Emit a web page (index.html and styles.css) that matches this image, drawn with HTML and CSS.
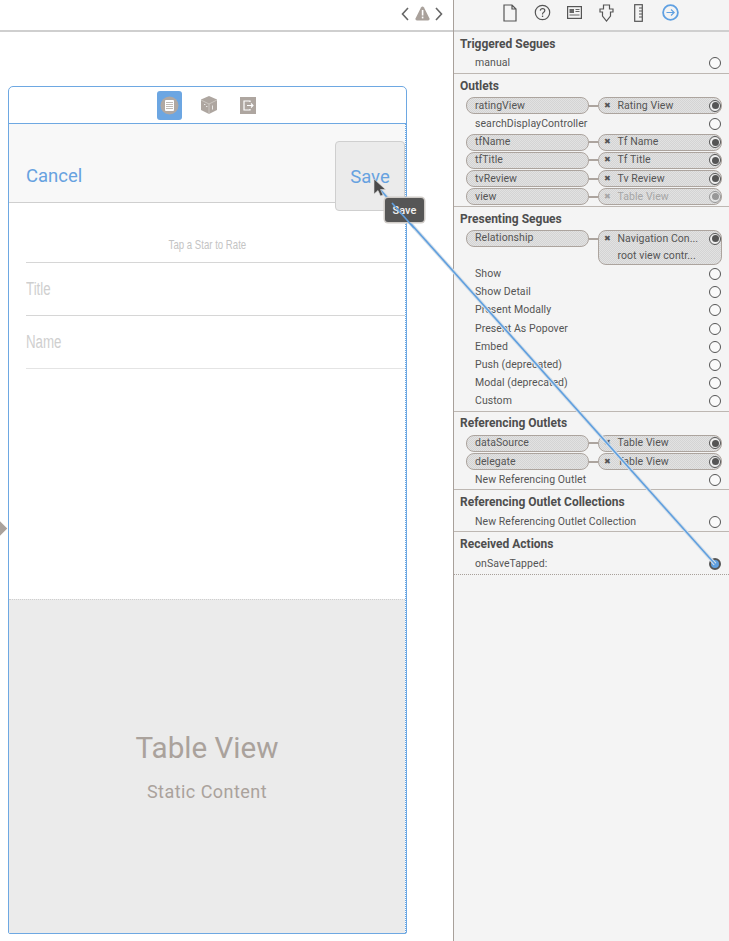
FILE: index.html
```html
<!DOCTYPE html>
<html lang="en">
<head>
<meta charset="utf-8">
<title>Storyboard connections</title>
<link rel="stylesheet" href="styles.css">
</head>
<body>
<div class="app">
  <main class="editor">
    <div class="jumpbar">
      <svg class="jump-icon" width="52" height="20" viewBox="0 0 52 20">
        <path d="M8 4 L2.5 10 L8 16" class="chev"/>
        <path d="M21 3.5 Q22.5 1.5 24 3.5 L29.5 14.5 Q30 16.5 28 16.5 H17 Q15 16.5 15.5 14.5 Z" class="warn"/>
        <rect x="21.8" y="6" width="1.6" height="5.5" fill="#fff"/>
        <rect x="21.8" y="12.6" width="1.6" height="1.8" fill="#fff"/>
        <path d="M36 4 L41.5 10 L36 16" class="chev"/>
      </svg>
    </div>
    <div class="canvas">
      <div class="entry-arrow"></div>
      <section class="scene">
        <div class="scene-dock">
          <span class="dock-active">
            <svg width="25" height="29" viewBox="0 0 25 29">
              <circle cx="12.5" cy="14.5" r="9" fill="#b0a8a2"/>
              <rect x="8" y="9" width="9" height="11" rx="1" fill="#fff"/>
              <path d="M9 11.5h7M9 13.5h7M9 15.5h7M9 17.5h7" stroke="#b0a8a2" stroke-width=".8"/>
            </svg>
          </span>
          <svg width="16" height="18" viewBox="0 0 16 18">
            <path d="M8 0 L16 3.5 V14 L8 18 L0 14 V3.5 Z" fill="#aea6a0"/>
            <path d="M8 8 V18 M0 4 L8 8 L16 4" stroke="#d8d4d0" stroke-width=".7" fill="none"/>
            <path d="M11.5 9.5V13.5M3 8.5h1.4M5 10.5h1.4" stroke="#e8e6e4" stroke-width="1"/>
          </svg>
          <svg class="dock-exit" width="16" height="17" viewBox="0 0 16 17">
            <rect width="16" height="17" fill="#aea6a0"/>
            <path d="M10 5 V4 H4 V13 H10 V12" stroke="#fff" stroke-width="1.2" fill="none"/>
            <path d="M7 8.5 H13 M11 6.5 L13 8.5 L11 10.5" stroke="#fff" stroke-width="1.1" fill="none"/>
          </svg>
        </div>
        <div class="scene-view">
          <header class="navbar">
            <span class="nav-item">Cancel</span>
            <span class="save-box"><span class="nav-item">Save</span></span>
          </header>
          <div class="form">
            <div class="form-row rate-row"><span class="narrow">Tap a Star to Rate</span></div>
            <div class="form-row field-row"><span class="narrow left">Title</span></div>
            <div class="form-row field-row"><span class="narrow left">Name</span></div>
          </div>
          <div class="placeholder">
            <div class="ph-title">Table View</div>
            <div class="ph-sub">Static Content</div>
          </div>
        </div>
      </section>
    </div>
  </main>

  <aside class="inspector">
    <nav class="ins-tabs">
      <svg width="14" height="18" viewBox="0 0 14 18"><path d="M1 1 H9 L13 5 V17 H1 Z M9 1 V5 H13" class="tab-line"/></svg>
      <svg width="17" height="17" viewBox="0 0 17 17"><circle cx="8.5" cy="8.5" r="7.2" class="tab-line"/><path d="M6.3 6.6 Q6.5 4.5 8.6 4.5 Q10.8 4.6 10.8 6.5 Q10.8 7.7 9.4 8.5 Q8.5 9 8.5 10.4" class="tab-line"/><rect x="7.9" y="11.6" width="1.3" height="1.4" fill="#555"/></svg>
      <svg width="15" height="13" viewBox="0 0 15 13"><rect x=".6" y=".6" width="13.8" height="11.8" class="tab-line"/><rect x="2.5" y="3" width="4.5" height="4" fill="#666"/><path d="M8.5 3.5H12.5M8.5 5.5H12.5M2.5 9H12.5" stroke="#666"/></svg>
      <svg width="15" height="18" viewBox="0 0 15 18"><path d="M4.5 1 H10.5 V5 H14 V8 H11.5 V12 L7.5 17 L3.5 12 V8 H1 V5 H4.5 Z" class="tab-line"/></svg>
      <svg width="9" height="18" viewBox="0 0 9 18"><rect x=".7" y=".7" width="7.6" height="16.6" class="tab-line"/><path d="M5 4H8M5 7H8M5 10H8M5 13H8" stroke="#555"/></svg>
      <svg width="17" height="17" viewBox="0 0 17 17"><circle cx="8.5" cy="8.5" r="7.4" fill="none" stroke="#5fa0e2" stroke-width="1.8"/><path d="M4.5 8.5H12M9 5.5L12.2 8.5L9 11.5" fill="none" stroke="#5fa0e2" stroke-width="1.1"/></svg>
    </nav>

    <section class="ins-section first">
      <h2>Triggered Segues</h2>
      <div class="row"><span class="label">manual</span><i class="radio"></i></div>
    </section>

    <section class="ins-section">
      <h2>Outlets</h2>
      <div class="row linked"><span class="pill from">ratingView</span><i class="link"></i><span class="pill to"><b>✖</b>Rating View<i class="radio on"></i></span></div>
      <div class="row"><span class="label">searchDisplayController</span><i class="radio"></i></div>
      <div class="row linked"><span class="pill from">tfName</span><i class="link"></i><span class="pill to"><b>✖</b>Tf Name<i class="radio on"></i></span></div>
      <div class="row linked"><span class="pill from">tfTitle</span><i class="link"></i><span class="pill to"><b>✖</b>Tf Title<i class="radio on"></i></span></div>
      <div class="row linked"><span class="pill from">tvReview</span><i class="link"></i><span class="pill to"><b>✖</b>Tv Review<i class="radio on"></i></span></div>
      <div class="row linked"><span class="pill from">view</span><i class="link"></i><span class="pill to faded"><b>✖</b>Table View<i class="radio on"></i></span></div>
    </section>

    <section class="ins-section">
      <h2>Presenting Segues</h2>
      <div class="row linked tall"><span class="pill from">Relationship</span><i class="link"></i><span class="pill to two"><span class="two-line"><b>✖</b>Navigation Con...<i class="radio on"></i></span><span class="two-sub">root view contr...</span></span></div>
      <div class="row"><span class="label">Show</span><i class="radio"></i></div>
      <div class="row"><span class="label">Show Detail</span><i class="radio"></i></div>
      <div class="row"><span class="label">Present Modally</span><i class="radio"></i></div>
      <div class="row"><span class="label">Present As Popover</span><i class="radio"></i></div>
      <div class="row"><span class="label">Embed</span><i class="radio"></i></div>
      <div class="row"><span class="label">Push (deprecated)</span><i class="radio"></i></div>
      <div class="row"><span class="label">Modal (deprecated)</span><i class="radio"></i></div>
      <div class="row"><span class="label">Custom</span><i class="radio"></i></div>
    </section>

    <section class="ins-section">
      <h2>Referencing Outlets</h2>
      <div class="row linked"><span class="pill from">dataSource</span><i class="link"></i><span class="pill to"><b>✖</b>Table View<i class="radio on"></i></span></div>
      <div class="row linked"><span class="pill from">delegate</span><i class="link"></i><span class="pill to"><b>✖</b>Table View<i class="radio on"></i></span></div>
      <div class="row"><span class="label">New Referencing Outlet</span><i class="radio"></i></div>
    </section>

    <section class="ins-section">
      <h2>Referencing Outlet Collections</h2>
      <div class="row"><span class="label">New Referencing Outlet Collection</span><i class="radio"></i></div>
    </section>

    <section class="ins-section last">
      <h2>Received Actions</h2>
      <div class="row"><span class="label">onSaveTapped:</span><i class="radio active"></i></div>
    </section>
  </aside>

  <svg class="wire" width="729" height="941" viewBox="0 0 729 941">
    <line x1="377" y1="186" x2="715" y2="564" stroke="#d5dfe8" stroke-width="3.6"/>
    <line x1="377" y1="186" x2="715" y2="564" stroke="#5f9fdf" stroke-width="1.6"/>
  </svg>
  <div class="drag-tip">Save</div>
  <svg class="wire" width="729" height="941" viewBox="0 0 729 941">
    <line x1="392" y1="203" x2="414" y2="228" stroke="#5f9fdf" stroke-width="1.6"/>
    <path d="M374 179 V194 L378 190.5 L380.5 196 L383 195 L380.5 189.5 L385.5 189.5 Z" fill="#4a4a4a" stroke="#ddd" stroke-width=".6"/>
  </svg>
</div>
</body>
</html>
```
FILE: styles.css
```css
* { box-sizing: border-box; }
html, body { margin: 0; padding: 0; }
body { width: 729px; height: 941px; overflow: hidden; background: #fff; font-family: "Roboto", "Liberation Sans", sans-serif; }
.app { position: relative; display: grid; grid-template-columns: 453px 276px; width: 729px; height: 941px; overflow: hidden; }

.editor { display: flex; flex-direction: column; height: 941px; background: #fff; }
.jumpbar { height: 32px; flex: none; display: flex; justify-content: flex-end; align-items: center; padding: 0 1px 3px 0; border-bottom: 2px solid #cfcfcf; }
.chev { fill: none; stroke: #666; stroke-width: 1.6; }
.warn { fill: #a9a19b; }

.canvas { position: relative; flex: 1; padding: 54px 46px 8px 8px; }
.entry-arrow { position: absolute; left: -6px; top: 491px; width: 11px; height: 11px; background: #aaa29c; transform: rotate(45deg); }

.scene { display: flex; flex-direction: column; height: 848px; border: 1.5px solid #6ea8e2; border-radius: 5px 5px 2px 2px; }
.scene-dock { height: 37px; flex: none; display: flex; align-items: center; gap: 19px; padding-left: 147.5px; border-bottom: 1.5px solid #6ea8e2; }
.dock-active { display: flex; width: 25px; height: 29px; background: #6ca6e2; border-radius: 3px; }
.dock-exit { margin-left: 4px; }

.scene-view { flex: 1; display: flex; flex-direction: column; border-right: 1px dotted #6ea8e2; }
.navbar { position: relative; height: 79px; flex: none; display: flex; justify-content: space-between; padding: 0 0 0 17px; background: #f8f8f8; border-bottom: 1.5px solid #cfcfcf; }
.nav-item { font-size: 18.5px; color: #67a2e0; line-height: 24px; align-self: flex-start; margin-top: 40px; }
.save-box { position: absolute; right: 0; top: 17px; width: 70px; height: 70px; display: flex; justify-content: center; background: #ebebeb; border: 1.5px solid #cfcfcf; border-radius: 4px; }
.save-box .nav-item { margin-top: 23px; }

.form { flex: 1; padding-left: 17px; }
.form-row { border-bottom: 1px solid #d6d6d6; color: #cfcfcf; font-family: "Liberation Sans", sans-serif; }
.narrow { display: inline-block; transform: scaleX(.74); }
.narrow.left { transform-origin: left center; }
.rate-row { height: 60px; padding: 34px 17px 0 0; text-align: center; font-size: 13px; line-height: 16px; color: #c4c4c4; }
.field-row { height: 53px; padding-top: 15px; font-size: 18px; line-height: 22px; }
.field-row:last-child { border-bottom-width: 1.5px; border-bottom-color: #e4e4e4; }

.placeholder { height: 334px; flex: none; display: flex; flex-direction: column; align-items: center; padding-top: 130px; background: #ebebeb; border-top: 1px dotted #cfcfcf; color: #aaa29c; }
.ph-title { font-size: 29.6px; line-height: 36px; }
.ph-sub { font-size: 18px; line-height: 22px; margin-top: 15px; letter-spacing: .45px; }

.inspector { height: 941px; background: #f4f4f4; border-left: 1.5px solid #a8a09a; color: #555; font-size: 10.5px; }
.ins-tabs { height: 32px; display: grid; grid-template-columns: repeat(6, 32px); justify-items: center; align-items: center; padding: 0 0 5px 40px; border-bottom: 2px solid #cfcfcf; }
.tab-line { fill: none; stroke: #555; stroke-width: 1.2; }

.ins-section { padding: 4.6px 7px .4px 12px; border-bottom: 1px solid #bdb7b2; }
.ins-section.first { padding-bottom: 1px; }
.ins-section.last { border-bottom: 1px dotted #a8a09a; }
.ins-section h2 { margin: 0 0 4px -6px; font-size: 12px; line-height: 14px; font-weight: 700; color: #4e4e4e; }
.ins-section.first h2 { margin-bottom: 3.4px; }
.row { display: flex; align-items: center; justify-content: space-between; height: 18.2px; padding: 0 1px 0 9px; line-height: 14px; letter-spacing: .06px; }
.row.linked { padding: 0; justify-content: flex-start; }
.row.tall { height: 35px; align-items: flex-start; }
.pill { display: flex; align-items: center; height: 17px; background: repeating-conic-gradient(#d4d4d4 0 25%, #e2e2e2 0 50%) 0 0 / 2px 2px; border: 1.5px solid #aca49e; border-radius: 8px; }
.pill.from { width: 123px; padding-left: 8px; }
.pill.to { flex: 1; padding: 0 0 0 5px; }
.pill.to b { width: 13.5px; font-size: 8px; font-weight: 400; color: #555; }
.pill.faded { color: #a6a6a6; }
.pill.faded b { color: #a6a6a6; }
.pill.faded .radio { opacity: .5; }
.pill.two { display: block; height: 35px; border-radius: 8px; padding: 0 0 0 5px; }
.two-line { display: flex; align-items: center; height: 16px; }
.two-sub { display: block; padding-left: 13.5px; line-height: 16px; margin-top: 1px; }
.link { flex: none; width: 9px; height: 2px; background: #aca49e; }
.row.tall .link { margin-top: 8px; }

.radio { display: block; flex: none; width: 12px; height: 12px; border: 1px solid #555; border-radius: 50%; background: #fafafa; }
.pill .radio { margin-left: auto; }
.radio.on { position: relative; background: #eee; }
.radio.on::after { content: ""; position: absolute; left: 1.5px; top: 1.5px; width: 7px; height: 7px; border-radius: 50%; background: #555; }
.radio.active { border: 2px solid #555; background: #5f9fdf; }

.wire { position: absolute; left: 0; top: 0; pointer-events: none; }
.drag-tip { position: absolute; left: 385px; top: 198px; width: 39px; height: 24px; display: flex; align-items: center; justify-content: center; background: #565656; color: #f2f2f2; font-size: 11px; font-weight: 500; border-radius: 3px; box-shadow: 0 0 0 1.5px #d0ccc8; }
```
